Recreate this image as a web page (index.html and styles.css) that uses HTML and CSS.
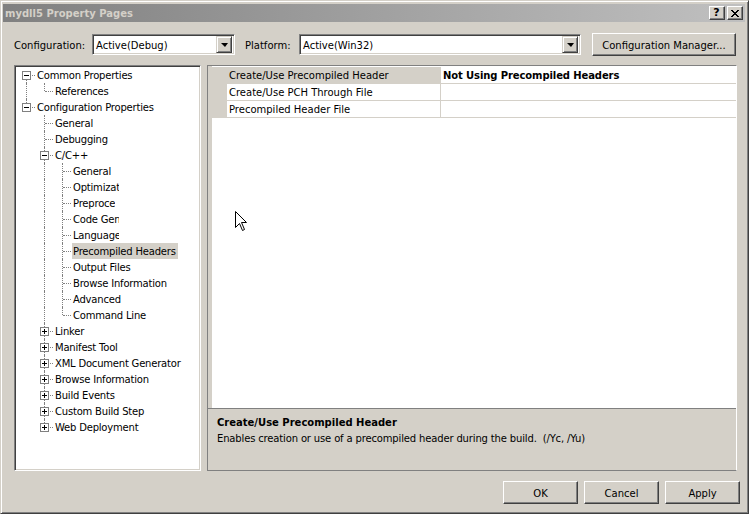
FILE: index.html
```html
<!DOCTYPE html>
<html>
<head>
<meta charset="utf-8">
<title>mydll5 Property Pages</title>
<link rel="stylesheet" href="styles.css">
</head>
<body>
<div class="window">
  <div class="titlebar">
    <span class="title">mydll5 Property Pages</span>
    <div class="capbtns">
      <span class="cbtn help">?</span>
      <span class="cbtn close"><svg width="8" height="7" viewBox="0 0 8 7"><path d="M0 0h2v1h-2z M6 0h2v1h-2z M1 1h2v1h-2z M5 1h2v1h-2z M2 2h4v1h-4z M3 3h2v1h-2z M2 4h4v1h-4z M1 5h2v1h-2z M5 5h2v1h-2z M0 6h2v1h-2z M6 6h2v1h-2z" fill="#000"/></svg></span>
    </div>
  </div>

  <div class="toprow">
    <span class="lbl lbl-conf">Configuration:</span>
    <div class="combo combo-conf"><span class="ctext">Active(Debug)</span><span class="dd"><i class="arrow"></i></span></div>
    <span class="lbl lbl-plat">Platform:</span>
    <div class="combo combo-plat"><span class="ctext">Active(Win32)</span><span class="dd"><i class="arrow"></i></span></div>
    <button class="btn btn-cm">Configuration Manager...</button>
  </div>

  <div class="main">
    <div class="tree">
      <div class="row"><span class="c f"><i class="box minus"></i></span><span class="tx">Common Properties</span></div>
      <div class="row"><span class="c v"></span><span class="c l"></span><span class="tx">References</span></div>
      <div class="row"><span class="c l"><i class="box minus"></i></span><span class="tx">Configuration Properties</span></div>
      <div class="row"><span class="c"></span><span class="c t"></span><span class="tx">General</span></div>
      <div class="row"><span class="c"></span><span class="c t"></span><span class="tx">Debugging</span></div>
      <div class="row"><span class="c"></span><span class="c t"><i class="box minus"></i></span><span class="tx">C/C++</span></div>
      <div class="row"><span class="c"></span><span class="c v"></span><span class="c t"></span><span class="tx">General</span></div>
      <div class="row"><span class="c"></span><span class="c v"></span><span class="c t"></span><span class="tx clip">Optimizat</span></div>
      <div class="row"><span class="c"></span><span class="c v"></span><span class="c t"></span><span class="tx clip">Preproce</span></div>
      <div class="row"><span class="c"></span><span class="c v"></span><span class="c t"></span><span class="tx clip">Code Gen</span></div>
      <div class="row"><span class="c"></span><span class="c v"></span><span class="c t"></span><span class="tx clip">Language</span></div>
      <div class="row"><span class="c"></span><span class="c v"></span><span class="c t"></span><span class="tx sel">Precompiled Headers</span></div>
      <div class="row"><span class="c"></span><span class="c v"></span><span class="c t"></span><span class="tx">Output Files</span></div>
      <div class="row"><span class="c"></span><span class="c v"></span><span class="c t"></span><span class="tx">Browse Information</span></div>
      <div class="row"><span class="c"></span><span class="c v"></span><span class="c t"></span><span class="tx">Advanced</span></div>
      <div class="row"><span class="c"></span><span class="c v"></span><span class="c l"></span><span class="tx">Command Line</span></div>
      <div class="row"><span class="c"></span><span class="c t"><i class="box plus"></i></span><span class="tx">Linker</span></div>
      <div class="row"><span class="c"></span><span class="c t"><i class="box plus"></i></span><span class="tx">Manifest Tool</span></div>
      <div class="row"><span class="c"></span><span class="c t"><i class="box plus"></i></span><span class="tx">XML Document Generator</span></div>
      <div class="row"><span class="c"></span><span class="c t"><i class="box plus"></i></span><span class="tx">Browse Information</span></div>
      <div class="row"><span class="c"></span><span class="c t"><i class="box plus"></i></span><span class="tx">Build Events</span></div>
      <div class="row"><span class="c"></span><span class="c t"><i class="box plus"></i></span><span class="tx">Custom Build Step</span></div>
      <div class="row"><span class="c"></span><span class="c l"><i class="box plus"></i></span><span class="tx">Web Deployment</span></div>
    </div>

    <div class="props">
      <div class="grid">
        <div class="prow">
          <span class="pm"></span>
          <span class="pn pn-sel">Create/Use Precompiled Header</span>
          <span class="pv pv-bold">Not Using Precompiled Headers</span>
        </div>
        <div class="prow">
          <span class="pm"></span>
          <span class="pn">Create/Use PCH Through File</span>
          <span class="pv"></span>
        </div>
        <div class="prow">
          <span class="pm"></span>
          <span class="pn">Precompiled Header File</span>
          <span class="pv"></span>
        </div>
      </div>
      <div class="desc">
        <div class="desc-title">Create/Use Precompiled Header</div>
        <div class="desc-text"><span class="desc-main">Enables creation or use of a precompiled header during the build.</span><span class="desc-sw">(/Yc, /Yu)</span></div>
      </div>
    </div>
  </div>

  <div class="buttons">
    <button class="btn btn-dlg">OK</button>
    <button class="btn btn-dlg">Cancel</button>
    <button class="btn btn-dlg">Apply</button>
  </div>

  <svg class="cursor" width="13" height="21" viewBox="0 0 13 21"><path d="M0.5 0.5 V16.5 L4.5 12.5 L7.5 19.5 L9.5 18.5 L6.5 11.5 H11.5 Z" fill="#fff" stroke="#000" stroke-width="1"/></svg>
</div>
</body>
</html>
```

FILE: styles.css
```css
* { box-sizing: border-box; }

html, body {
  margin: 0;
  padding: 0;
  background: #d4d0c8;
}

body {
  font-family: "DejaVu Sans", "Liberation Sans", sans-serif;
  font-size: 10px;
  color: #000;
}

.window {
  position: relative;
  width: 749px;
  height: 514px;
  background: #d4d0c8;
  border: 1px solid;
  border-color: #d4d0c8 #404040 #404040 #d4d0c8;
  box-shadow: inset 1px 1px 0 #ffffff, inset -1px -1px 0 #808080;
  padding: 3px 3px 3px 2px;
  display: flex;
  flex-direction: column;
  overflow: hidden;
}

/* title bar */
.titlebar {
  height: 18px;
  flex: none;
  display: flex;
  align-items: center;
  padding: 0 2px 0 2px;
  background: linear-gradient(to right, #808080, #c0c0c0);
}

.title {
  font-weight: bold;
  font-size: 10px;
  color: #d4d0c8;
  padding-top: 1px;
}

.capbtns {
  margin-left: auto;
  display: flex;
  gap: 2px;
}

.cbtn {
  width: 16px;
  height: 14px;
  background: #d4d0c8;
  border: 1px solid;
  border-color: #ffffff #404040 #404040 #ffffff;
  box-shadow: inset -1px -1px 0 #808080;
  display: flex;
  align-items: center;
  justify-content: center;
}

.cbtn.help {
  font-weight: bold;
  font-size: 11px;
  line-height: 12px;
  padding-right: 1px;
}

.cbtn.close svg {
  display: block;
  margin-right: 1px;
}

/* top row */
.toprow {
  flex: none;
  display: flex;
  align-items: center;
  height: 23px;
  margin-top: 11px;
  padding-left: 11px;
}

.lbl {
  flex: none;
  white-space: nowrap;
  padding-top: 1px;
}

.lbl-conf { width: 78px; }
.lbl-plat { width: 54px; margin-left: 10px; }

.combo {
  flex: none;
  height: 21px;
  background: #fff;
  border: 1px solid;
  border-color: #808080 #ffffff #ffffff #808080;
  box-shadow: inset 1px 1px 0 #404040, inset -1px -1px 0 #d4d0c8;
  padding: 2px;
  display: flex;
  align-items: center;
}

.combo-conf { width: 143px; }
.combo-plat { width: 282px; }

.ctext {
  padding-left: 1px;
  padding-top: 1px;
  white-space: nowrap;
}

.dd {
  margin-left: auto;
  width: 16px;
  height: 17px;
  background: #d4d0c8;
  border: 1px solid;
  border-color: #d4d0c8 #404040 #404040 #d4d0c8;
  box-shadow: inset 1px 1px 0 #ffffff, inset -1px -1px 0 #808080;
  display: flex;
  align-items: center;
  justify-content: center;
}

.arrow {
  display: block;
  width: 0;
  height: 0;
  border-left: 4px solid transparent;
  border-right: 3px solid transparent;
  border-top: 4px solid #000;
  margin-top: 1px;
}

.btn {
  font-family: "DejaVu Sans", "Liberation Sans", sans-serif;
  font-size: 10px;
  color: #000;
  background: #d4d0c8;
  border: 1px solid;
  border-color: #ffffff #404040 #404040 #ffffff;
  box-shadow: inset -1px -1px 0 #808080;
  padding: 1px 0 0 0;
  height: 23px;
  text-align: center;
}

.btn-cm {
  width: 144px;
  margin-left: 11px;
  flex: none;
}

/* main area */
.main {
  flex: none;
  display: flex;
  height: 406px;
  margin-top: 9px;
}

.tree {
  flex: none;
  width: 187px;
  margin-left: 11px;
  background: #fff;
  border: 1px solid;
  border-color: #808080 #ffffff #ffffff #808080;
  box-shadow: inset 1px 1px 0 #404040, inset -1px -1px 0 #d4d0c8;
  padding: 1px 0 0 2px;
  overflow: hidden;
  letter-spacing: -0.2px;
}

.row {
  display: flex;
  height: 16px;
  align-items: flex-start;
}

.c {
  position: relative;
  flex: none;
  width: 18px;
  height: 16px;
}

.v::before, .t::before {
  content: "";
  position: absolute;
  left: 9px;
  top: 0;
  bottom: 0;
  border-left: 1px dotted #808080;
}

.l::before {
  content: "";
  position: absolute;
  left: 9px;
  top: 0;
  height: 8px;
  border-left: 1px dotted #808080;
}

.f::before {
  content: "";
  position: absolute;
  left: 9px;
  top: 8px;
  bottom: 0;
  border-left: 1px dotted #808080;
}

.t::after, .l::after, .f::after {
  content: "";
  position: absolute;
  left: 10px;
  top: 8px;
  width: 8px;
  border-top: 1px dotted #808080;
}

.box {
  position: absolute;
  left: 5px;
  top: 4px;
  width: 9px;
  height: 9px;
  border: 1px solid #808080;
  background: #fff;
  z-index: 1;
}

.box::before {
  content: "";
  position: absolute;
  left: 1px;
  top: 3px;
  width: 5px;
  height: 1px;
  background: #000;
}

.box.plus::after {
  content: "";
  position: absolute;
  left: 3px;
  top: 1px;
  width: 1px;
  height: 5px;
  background: #000;
}

.tx {
  margin-left: 1px;
  padding: 1px 2px 0 1px;
  line-height: 15px;
  height: 16px;
  white-space: nowrap;
}

.tx.clip {
  display: inline-block;
  max-width: 47px;
  overflow: hidden;
  padding-right: 0;
}

.tx.sel {
  background: #d4d0c8;
}

/* property grid */
.props {
  flex: none;
  width: 530px;
  margin-left: 6px;
  border: 1px solid #808080;
  border-right-color: #ffffff;
  display: flex;
  flex-direction: column;
}

.grid {
  flex: none;
  height: 342px;
  margin-left: 4px;
  background: #fff;
  padding-top: 1px;
}

.prow {
  display: flex;
  height: 17px;
}

.pm {
  flex: none;
  width: 15px;
  background: #d4d0c8;
}

.pn {
  flex: none;
  width: 214px;
  border-bottom: 1px solid #d4d0c8;
  border-right: 1px solid #d4d0c8;
  padding: 1px 0 0 2px;
  line-height: 15px;
  white-space: nowrap;
}

.pn-sel {
  background: #d4d0c8;
}

.pv {
  flex: 1;
  border-bottom: 1px solid #d4d0c8;
  padding: 1px 0 0 2px;
  line-height: 15px;
  white-space: nowrap;
}

.pv-bold {
  font-weight: bold;
  letter-spacing: -0.1px;
}

.desc {
  flex: 1;
  border-top: 1px solid #808080;
  padding: 6px 0 0 9px;
}

.desc-title {
  font-weight: bold;
  line-height: 16px;
}

.desc-text {
  line-height: 16px;
  display: flex;
  white-space: nowrap;
}

.desc-main {
  letter-spacing: -0.15px;
}

.desc-sw {
  margin-left: 6px;
  letter-spacing: -0.15px;
}

/* dialog buttons */
.buttons {
  flex: none;
  display: flex;
  justify-content: flex-end;
  gap: 6px;
  margin-top: 10px;
  padding-right: 5px;
}

.btn-dlg {
  width: 75px;
}

.cursor {
  position: absolute;
  left: 234px;
  top: 210px;
}
```
